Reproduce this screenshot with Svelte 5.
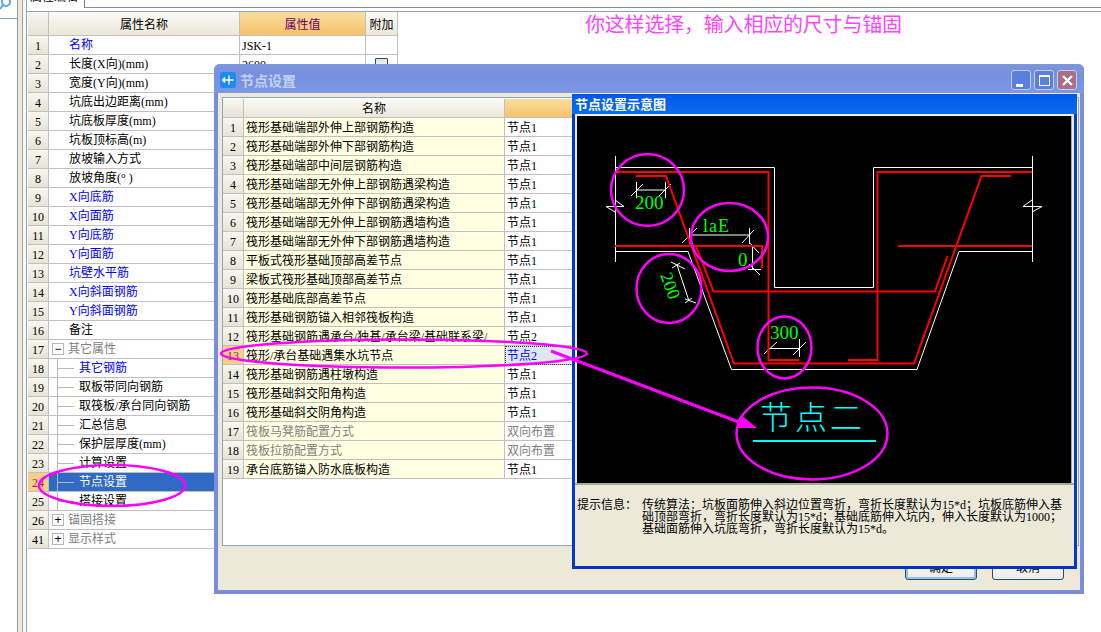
<script lang="ts">
  type Row = { n: number; label: string; cls?: string; value?: string; tree?: string; depth?: number };

  const props: Row[] = [
    { n: 1, label: "名称", cls: "blue", value: "JSK-1" },
    { n: 2, label: "长度(X向)(mm)", value: "2600" },
    { n: 3, label: "宽度(Y向)(mm)" },
    { n: 4, label: "坑底出边距离(mm)" },
    { n: 5, label: "坑底板厚度(mm)" },
    { n: 6, label: "坑板顶标高(m)" },
    { n: 7, label: "放坡输入方式" },
    { n: 8, label: "放坡角度(°  )" },
    { n: 9, label: "X向底筋", cls: "blue" },
    { n: 10, label: "X向面筋", cls: "blue" },
    { n: 11, label: "Y向底筋", cls: "blue" },
    { n: 12, label: "Y向面筋", cls: "blue" },
    { n: 13, label: "坑壁水平筋", cls: "blue" },
    { n: 14, label: "X向斜面钢筋", cls: "blue" },
    { n: 15, label: "Y向斜面钢筋", cls: "blue" },
    { n: 16, label: "备注" },
    { n: 17, label: "其它属性", cls: "gray", tree: "minus" },
    { n: 18, label: "其它钢筋", cls: "blue", depth: 1 },
    { n: 19, label: "取板带同向钢筋", depth: 1 },
    { n: 20, label: "取筏板/承台同向钢筋", depth: 1 },
    { n: 21, label: "汇总信息", depth: 1 },
    { n: 22, label: "保护层厚度(mm)", depth: 1 },
    { n: 23, label: "计算设置", depth: 1 },
    { n: 24, label: "节点设置", cls: "sel", depth: 1 },
    { n: 25, label: "搭接设置", depth: 1 },
    { n: 26, label: "锚固搭接", cls: "gray", tree: "plus" },
    { n: 41, label: "显示样式", cls: "gray", tree: "plus" }
  ];

  const nodes = [
    ["筏形基础端部外伸上部钢筋构造", "节点1"],
    ["筏形基础端部外伸下部钢筋构造", "节点1"],
    ["筏形基础端部中间层钢筋构造", "节点1"],
    ["筏形基础端部无外伸上部钢筋遇梁构造", "节点1"],
    ["筏形基础端部无外伸下部钢筋遇梁构造", "节点1"],
    ["筏形基础端部无外伸上部钢筋遇墙构造", "节点1"],
    ["筏形基础端部无外伸下部钢筋遇墙构造", "节点1"],
    ["平板式筏形基础顶部高差节点", "节点1"],
    ["梁板式筏形基础顶部高差节点", "节点1"],
    ["筏形基础底部高差节点", "节点1"],
    ["筏形基础钢筋锚入相邻筏板构造", "节点1"],
    ["筏形基础钢筋遇承台/独基/承台梁/基础联系梁/", "节点2"],
    ["筏形/承台基础遇集水坑节点", "节点2"],
    ["筏形基础钢筋遇柱墩构造", "节点1"],
    ["筏形基础斜交阳角构造", "节点1"],
    ["筏形基础斜交阴角构造", "节点1"],
    ["筏板马凳筋配置方式", "双向布置"],
    ["筏板拉筋配置方式", "双向布置"],
    ["承台底筋锚入防水底板构造", "节点1"]
  ];
</script>

<div class="screen">
  <div class="side">
    <svg class="lens" width="12" height="12" viewBox="0 0 12 12"><circle cx="6" cy="2" r="4" fill="none" stroke="#5aa8d8" stroke-width="2" /><path d="M3 5 0 9" stroke="#5aa8d8" stroke-width="2" /></svg>
  </div>
  <div class="strip"></div>

  <div class="pane">
    <div class="tabs"><span class="tab">属性编辑</span><span class="tab-rest"></span></div>
    <div class="rule"></div>
    <div class="prop-grid">
      <div class="row head">
        <span class="idx"></span>
        <span class="name-h">属性名称</span>
        <span class="val-h"><em>属性值</em></span>
        <span class="att-h">附加</span>
      </div>
      {#each props as r}
        <div class="row" class:selected={r.cls === "sel"}>
          <span class="idx" class:hot={r.cls === "sel"}>{r.n}</span>
          <span class="name {r.cls ?? ''}">
            {#if r.tree}
              <i class="box">{r.tree === "minus" ? "−" : "+"}</i>
            {:else if r.depth}
              <i class="branch"></i>
            {/if}
            <b class:top={!r.tree && !r.depth}>{r.label}</b>
          </span>
          {#if r.n <= 16}
            <span class="val">{r.value ?? ""}</span>
            <span class="att">{#if r.n === 2}<i class="check"></i>{/if}</span>
          {/if}
        </div>
      {/each}
    </div>
    <div class="hint">你这样选择，输入相应的尺寸与锚固</div>
  </div>

  <section class="dialog">
    <header class="title">
      <span class="app-icon">
        <svg width="16" height="16" viewBox="0 0 16 16"><path d="M2.500 8h11M9 3.500v9M5 5.500 2.500 8 5 10.500" fill="none" stroke="#fff" stroke-width="1.400" /></svg>
      </span>
      <span class="title-text">节点设置</span>
      <span class="ctl">
        <span class="cbtn"><i class="min"></i></span>
        <span class="cbtn"><i class="max"></i></span>
        <span class="cbtn close">
          <svg width="13" height="13" viewBox="0 0 13 13"><path d="M2 2 11 11M11 2 2 11" stroke="#fff" stroke-width="2.200" /></svg>
        </span>
      </span>
    </header>
    <div class="dialog-body">
      <div class="node-grid">
        <div class="nrow nhead">
          <span class="idx"></span>
          <span class="nname-h">名称</span>
          <span class="nval-h"></span>
        </div>
        {#each nodes as [label, value], i}
          <div class="nrow" class:muted={i === 16 || i === 17}>
            <span class="idx" class:hot={i === 12}>{i + 1}</span>
            <span class="nname">{label}</span>
            <span class="nval" class:active={i === 12}>{value}</span>
          </div>
        {/each}
      </div>
      <div class="buttons">
        <span class="btn focus">确定</span>
        <span class="btn">取消</span>
      </div>
    </div>
  </section>

  <section class="preview">
    <header class="ptitle">节点设置示意图</header>
    <div class="canvas">
      <svg width="494" height="367" viewBox="0 0 494 367">
        <g transform="translate(-577 -116)" fill="none">
          <g stroke="#fff" stroke-width="1">
            <path d="M615.500 156V262M1032.500 156V262" />
            <path d="M615 167.500H774.500V287.500H873.500V167.500H1032" />
            <path d="M615 251.500H688L731.500 369.500H917L959 251.500H1032" />
            <path d="M615 200 624 206.500H606L615 212M1032 200 1023 206.500H1042L1032 212" />
            <path d="M636 190H666M636.500 182V198M665.500 182V198M631 196 643 184M659 196 671 184" />
            <path d="M689 235H749M689.500 228V244M749.500 228V244M682 243 697 228M742 243 754 230" />
            <path d="M752.500 245V269M748 269.500H761M749 242 759 253M749 264 760 275" />
            <path d="M677 265 689 301M671 262 685 269M685 299 696 303M672 268 680 263M685 303 692 298" />
            <path d="M769 348.500H800M764 354 777 342M793 355 806 342M799.500 339V357" />
          </g>
          <g stroke="#ff0000" stroke-width="2">
            <path d="M615 172H768.500V360H799" />
            <path d="M1032 172H877.500V360H848" />
            <path d="M636 176H666L734 363.500H914L981.500 176H1011" />
            <path d="M615 246H762V268" />
            <path d="M898 246H1032" />
            <path d="M696 246 713.500 291.500H935L947.500 256" />
          </g>
          <text x="635" y="209" class="dim">200</text>
          <text x="703" y="232" class="dim small">laE</text>
          <text x="738" y="266" class="dim">0</text>
          <text class="dim rot" transform="translate(660 275) rotate(70)">200</text>
          <text x="770" y="339" class="dim">300</text>
          <text x="760" y="429" class="cn">节点二</text>
          <path d="M753 441H876" stroke="#00ffff" stroke-width="2" />
        </g>
      </svg>
    </div>
    <div class="info">
      <span class="info-label">提示信息：</span>
      <p>传统算法：坑板面筋伸入斜边位置弯折，弯折长度默认为15*d；坑板底筋伸入基<br />础顶部弯折，弯折长度默认为15*d；基础底筋伸入坑内，伸入长度默认为1000；<br />基础面筋伸入坑底弯折，弯折长度默认为15*d。</p>
    </div>
  </section>

  <svg class="marks" width="1101" height="632" viewBox="0 0 1101 632">
    <g fill="none" stroke="#ff00ff" stroke-width="2.500">
      <ellipse cx="647.500" cy="190" rx="36.500" ry="36" />
      <ellipse cx="729.500" cy="237" rx="38.500" ry="34" />
      <ellipse cx="669" cy="288.500" rx="32.500" ry="34.500" />
      <ellipse cx="784.500" cy="347.500" rx="27" ry="31" />
      <ellipse cx="812" cy="433.500" rx="75.500" ry="46" />
      <ellipse cx="404" cy="353.500" rx="183" ry="14" />
      <ellipse cx="112" cy="485.500" rx="73" ry="20.500" />
    </g>
    <path d="M551 351 744 424" stroke="#ff00ff" stroke-width="3" />
    <path d="M741 415 757 428 738 428 737 423Z" fill="#ff00ff" />
  </svg>
</div>

<style>
  :global(body) { background: #fff; }
  .screen {
    position: relative;
    width: 1101px;
    height: 632px;
    overflow: hidden;
    display: flex;
    background: #fff;
    font-family: "Liberation Serif", "Noto Sans CJK SC", sans-serif;
    font-size: 12px;
    color: #000;
  }
  .side { width: 17px; height: 18px; border-bottom: 1px solid #7fa0c0; position: relative; flex: none; }
  .lens { position: absolute; left: 0; top: 0; }
  .strip { width: 9px; flex: none; box-sizing: border-box; border-left: 1px solid #8c98a4; background: linear-gradient(90deg, #ece9d8 0 4px, #a0a0a0 4px 5px, #f8f8f4 5px); }
  .pane { flex: 1; position: relative; border-left: 1px solid #8ca6be; }
  .tabs { height: 8px; display: flex; overflow: hidden; }
  .tab { flex: none; box-sizing: border-box; width: 58px; height: 18px; padding-left: 3px; border-right: 1px solid #808080; line-height: 14px; margin-top: -10px; }
  .tab-rest { flex: 1; border-bottom: 1px solid #8a9098; }
  .rule { height: 1px; margin-top: 3px; background: #8ca6be; }
  .prop-grid { margin-left: 1px; width: 370px; }
  .row { display: grid; grid-template-columns: 21px 191px 126px 32px; height: 19px; line-height: 20px; }
  .row > span { border-right: 1px solid #c0c0c0; border-bottom: 1px solid #c0c0c0; overflow: hidden; white-space: nowrap; }
  .row.head { height: 24px; line-height: 26px; }
  .idx { background: linear-gradient(#f8f7f0, #e6e3d6); text-align: center; }
  .idx.hot { background: #fbcd89; color: #8a2b6a; }
  .name-h, .att-h { background: linear-gradient(#fbfaf5, #ebe8da); text-align: center; }
  .val-h { background: linear-gradient(#fbdd9f, #f5c36a); text-align: center; }
  .val-h em { font-style: normal; color: #6a006a; }
  .name { display: flex; align-items: center; background: #fff; }
  .name b { font-weight: 400; }
  .name b.top { padding-left: 20px; }
  .name.blue { color: #0000ff; }
  .name.gray { color: #808080; }
  .name.sel { background: #316ac5; color: #fff; }
  .val { padding-left: 2px; background: #fff; }
  .att { background: #fff; display: flex; align-items: center; justify-content: center; }
  .check { display: block; width: 11px; height: 11px; border: 1px solid #1c5180; border-radius: 1px; background: linear-gradient(#e4e2da, #fff); }
  .box { display: block; flex: none; box-sizing: border-box; width: 12px; height: 12px; margin: 0 4px 0 3px; border: 1px solid #b8b8b8; font-style: normal; font-family: "Liberation Sans", sans-serif; color: #000; line-height: 10px; text-align: center; }
  .branch { display: block; flex: none; width: 17px; height: 18px; margin: 0 5px 0 8px; background: linear-gradient(#b8b8b8, #b8b8b8) 0 0 / 1px 100% no-repeat, linear-gradient(#b8b8b8, #b8b8b8) 0 9px / 100% 1px no-repeat; }
  .hint { position: absolute; left: 558px; top: 14px; font-size: 20px; letter-spacing: -0.2px; line-height: 22px; color: #ff44ff; white-space: nowrap; }

  .dialog {
    position: absolute;
    left: 214px;
    top: 64px;
    width: 870px;
    height: 530px;
    box-sizing: border-box;
    display: flex;
    flex-direction: column;
    background: #ece9d8;
    border: 4px solid #7a8cdc;
    border-top: 0;
    border-radius: 6px 6px 0 0;
  }
  .title {
    height: 29px;
    flex: none;
    box-sizing: border-box;
    display: flex;
    align-items: center;
    gap: 4px;
    padding: 3px 7px 0 4px;
    margin: 0 -4px;
    border-radius: 6px 6px 0 0;
    background: linear-gradient(#7f96dc, #7590e0 40%, #7d97e2);
    color: #c4d2f2;
    font-size: 14px;
    font-weight: 700;
  }
  .app-icon { width: 16px; height: 16px; border-radius: 3px; background: #1b8cf0; display: block; flex: none; margin-left: 2px; }
  .title-text { flex: 1; }
  .ctl { display: flex; gap: 3px; }
  .cbtn { width: 20px; height: 20px; box-sizing: border-box; border: 1px solid #c3d0f2; border-radius: 3px; background: #5b7fdc; position: relative; display: grid; place-items: center; }
  .cbtn.close { background: #a96f85; }
  .min { position: absolute; left: 4px; bottom: 2px; width: 7px; height: 3px; background: #fff; }
  .max { display: block; width: 9px; height: 8px; border: 1px solid #fff; border-top-width: 2px; }
  .dialog-body { flex: 1; position: relative; padding: 4px; }
  .node-grid { width: 857px; height: 449px; box-sizing: border-box; background: #fff; border: 1px solid #8ca6be; padding-top: 1px; }
  .nrow { display: grid; grid-template-columns: 21px 261px 68px; height: 19px; line-height: 20px; }
  .nrow > span { border-right: 1px solid #c0c0c0; border-bottom: 1px solid #c0c0c0; overflow: hidden; white-space: nowrap; }
  .nname { background: #ffffe1; padding-left: 2px; }
  .nval { padding-left: 2px; background: #fff; }
  .nval.active { background: #dde8f4; color: #0000ff; outline: 1px dotted #333; outline-offset: -1px; }
  .nname-h { background: linear-gradient(#fbfaf5, #ebe8da); text-align: center; }
  .nval-h { background: linear-gradient(#fbdd9f, #f5c36a); }
  .nrow.muted .nname, .nrow.muted .nval { color: #808080; }
  .buttons { position: absolute; right: 16px; top: 464px; display: flex; gap: 15px; }
  .btn { width: 72px; height: 23px; box-sizing: border-box; border: 1px solid #1c5180; border-radius: 3px; background: linear-gradient(#fff, #ecebe4); text-align: center; line-height: 21px; }
  .btn.focus { box-shadow: inset 0 0 0 2px #9dbbe8; }

  .preview {
    position: absolute;
    left: 572px;
    top: 94px;
    width: 505px;
    height: 475px;
    box-sizing: border-box;
    display: flex;
    flex-direction: column;
    background: #ece9d8;
    border: 3px solid #0638c8;
    border-top: 0;
    border-bottom-color: #0535bd;
  }
  .ptitle { height: 20px; flex: none; margin: 0 -3px; padding: 1px 3px 0; box-sizing: border-box; background: linear-gradient(#0058e6, #0a6cf0); color: #fff; font-size: 13px; font-weight: 700; line-height: 19px; }
  .canvas { height: 367px; flex: none; margin: 1px 2px 0 2px; background: #000; border-top: 1px solid #fff; border-right: 1px solid #aca899; overflow: hidden; }
  .canvas svg { display: block; }
  .info { flex: 1; display: flex; padding: 14px 8px 0 2px; line-height: 12px; border-top: 2px solid #aca899; }
  .info-label { flex: none; width: 65px; }
  .info p { margin: 0; white-space: nowrap; }
  .dim { fill: #00ff00; stroke: none; font-family: "Liberation Serif", serif; font-size: 19px; }
  .dim.small { font-size: 18px; letter-spacing: 1px; }
  .dim.rot { font-size: 18px; }
  .cn { fill: #00ffff; stroke: none; font-size: 32px; letter-spacing: 3px; font-family: "Noto Sans CJK SC", sans-serif; font-weight: 300; }
  .marks { position: absolute; left: 0; top: 0; pointer-events: none; }
</style>
